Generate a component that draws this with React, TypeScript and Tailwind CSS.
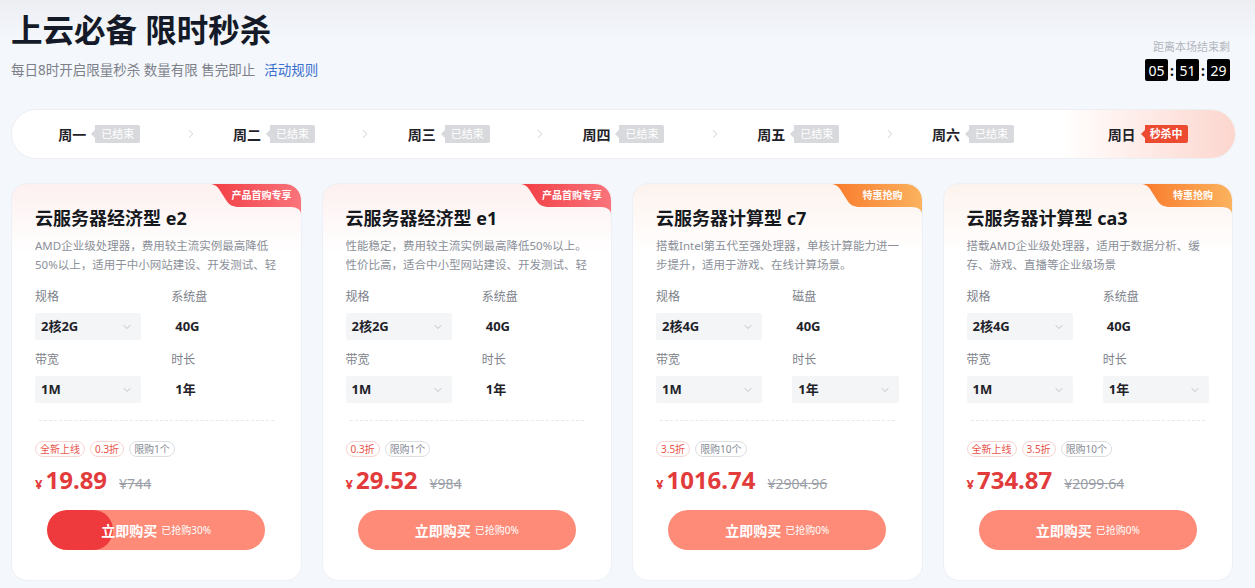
import { ChevronDown, ChevronRight } from "lucide-react";

type Spec = { label: string; value: string; select?: boolean };

type Card = {
  title: string;
  desc: string[];
  tag: "red" | "orange";
  tagText: string;
  specs: Spec[];
  badges: { text: string; red?: boolean }[];
  price: string;
  original: string;
  sold: number;
};

const DAYS = ["周一", "周二", "周三", "周四", "周五", "周六", "周日"];

const CARDS: Card[] = [
  {
    title: "云服务器经济型 e2",
    desc: ["AMD企业级处理器，费用较主流实例最高降低", "50%以上，适用于中小网站建设、开发测试、轻"],
    tag: "red",
    tagText: "产品首购专享",
    specs: [
      { label: "规格", value: "2核2G", select: true },
      { label: "系统盘", value: "40G" },
      { label: "带宽", value: "1M", select: true },
      { label: "时长", value: "1年" },
    ],
    badges: [{ text: "全新上线", red: true }, { text: "0.3折", red: true }, { text: "限购1个" }],
    price: "19.89",
    original: "744",
    sold: 30,
  },
  {
    title: "云服务器经济型 e1",
    desc: ["性能稳定，费用较主流实例最高降低50%以上。", "性价比高，适合中小型网站建设、开发测试、轻"],
    tag: "red",
    tagText: "产品首购专享",
    specs: [
      { label: "规格", value: "2核2G", select: true },
      { label: "系统盘", value: "40G" },
      { label: "带宽", value: "1M", select: true },
      { label: "时长", value: "1年" },
    ],
    badges: [{ text: "0.3折", red: true }, { text: "限购1个" }],
    price: "29.52",
    original: "984",
    sold: 0,
  },
  {
    title: "云服务器计算型 c7",
    desc: ["搭载Intel第五代至强处理器，单核计算能力进一", "步提升，适用于游戏、在线计算场景。"],
    tag: "orange",
    tagText: "特惠抢购",
    specs: [
      { label: "规格", value: "2核4G", select: true },
      { label: "磁盘", value: "40G" },
      { label: "带宽", value: "1M", select: true },
      { label: "时长", value: "1年", select: true },
    ],
    badges: [{ text: "3.5折", red: true }, { text: "限购10个" }],
    price: "1016.74",
    original: "2904.96",
    sold: 0,
  },
  {
    title: "云服务器计算型 ca3",
    desc: ["搭载AMD企业级处理器，适用于数据分析、缓", "存、游戏、直播等企业级场景"],
    tag: "orange",
    tagText: "特惠抢购",
    specs: [
      { label: "规格", value: "2核4G", select: true },
      { label: "系统盘", value: "40G" },
      { label: "带宽", value: "1M", select: true },
      { label: "时长", value: "1年", select: true },
    ],
    badges: [{ text: "全新上线", red: true }, { text: "3.5折", red: true }, { text: "限购10个" }],
    price: "734.87",
    original: "2099.64",
    sold: 0,
  },
];

function CornerTag({ color, text, id }: { color: "red" | "orange"; text: string; id: string }) {
  const stops = color === "red" ? ["#f23d43", "#f9747c"] : ["#f97a2b", "#fbb25e"];
  return (
    <div className="absolute right-0 top-0 h-[30px] w-[92px]">
      <svg width="92" height="30" viewBox="0 0 92 30" className="absolute inset-0">
        <defs>
          <linearGradient id={id} x1="0" y1="0" x2="1" y2="0">
            <stop offset="0" stopColor={stops[0]} />
            <stop offset="1" stopColor={stops[1]} />
          </linearGradient>
        </defs>
        <path
          d="M0 0 H76 A16 16 0 0 1 92 16 V30 C92 26 88 23 82 23 H30 C24 23 20 21 17 16 L10 5 C8 2 5 0 0 0 Z"
          fill={`url(#${id})`}
        />
      </svg>
      <span className="absolute left-[18px] right-[4px] top-[4px] text-center text-[10px] font-bold leading-[14px] text-white">
        {text}
      </span>
    </div>
  );
}

function SpecField({ spec }: { spec: Spec }) {
  return (
    <div className="flex flex-col">
      <span className="text-[12px] leading-[18px] text-[#7d828b]">{spec.label}</span>
      {spec.select ? (
        <div className="mt-[7px] flex h-[27px] items-center justify-between rounded-[2px] bg-[#f4f5f7] pl-[6px] pr-[8px]">
          <span className="text-[13px] font-bold text-[#1f2329]">{spec.value}</span>
          <ChevronDown size={12} strokeWidth={1.5} className="text-[#a9adb5]" />
        </div>
      ) : (
        <div className="mt-[7px] flex h-[27px] items-center pl-[4px]">
          <span className="text-[13px] font-bold text-[#1f2329]">{spec.value}</span>
        </div>
      )}
    </div>
  );
}

function ProductCard({ card, index }: { card: Card; index: number }) {
  const top = card.tag === "red" ? "#fdf0f0" : "#fdf3ee";
  return (
    <div
      className="relative overflow-hidden rounded-[16px] border border-[#edf0f5] px-[23px] pb-[30px] pt-[20px]"
      style={{ background: `linear-gradient(180deg, ${top} 0px, #ffffff 70px)` }}
    >
      <CornerTag color={card.tag} text={card.tagText} id={`tag-${index}`} />
      <h3 className="text-[18px] font-bold leading-[28px] text-[#15181d]">{card.title}</h3>
      <div className="mt-[4px] text-[11.5px] leading-[19px] text-[#8b9099]">
        {card.desc.map((line) => (
          <p key={line} className="overflow-hidden whitespace-nowrap">
            {line}
          </p>
        ))}
      </div>
      <div className="mt-[14px] grid grid-cols-2 gap-x-[30px] gap-y-[11px]">
        {card.specs.map((s) => (
          <SpecField key={s.label} spec={s} />
        ))}
      </div>
      <div className="mx-[4px] mt-[17px] border-t border-dashed border-[#e6e8ec]" />
      <div className="mt-[20px] flex items-center gap-[5px]">
        {card.badges.map((b) => (
          <span
            key={b.text}
            className={
              b.red
                ? "rounded-full border border-[#f8d4d2] px-[4px] text-[10px] leading-[14px] text-[#e8534a]"
                : "rounded-full border border-[#dcdee2] px-[4px] text-[10px] leading-[14px] text-[#858a93]"
            }
          >
            {b.text}
          </span>
        ))}
      </div>
      <div className="mt-[8px] flex items-baseline">
        <span className="text-[13px] font-bold text-[#e23b3b]">¥</span>
        <span className="ml-[3px] text-[24px] font-bold leading-[30px] text-[#e23b3b]">{card.price}</span>
        <span className="ml-[12px] text-[14px] text-[#9a9ea6] line-through">¥{card.original}</span>
      </div>
      <button className="relative mx-auto mt-[15px] flex h-[40px] w-[218px] items-center justify-center overflow-hidden rounded-full bg-[#fd8b78]">
        {card.sold > 0 ? (
          <span className="absolute left-0 top-0 h-full rounded-full bg-[#ee3a3d]" style={{ width: `${card.sold}%` }} />
        ) : null}
        <span className="relative text-[14px] font-bold text-white">立即购买</span>
        <span className="relative ml-[4px] text-[10px] text-white">已抢购{card.sold}%</span>
      </button>
    </div>
  );
}

export default function App() {
  return (
    <div
      className="min-h-[588px] px-[11px] pt-[10px]"
      style={{ fontFamily: '"Noto Sans", "Noto Sans CJK SC", sans-serif', background: "linear-gradient(180deg,#eceef2 0px,#f4f7fc 40px)" }}
    >
      <header className="flex items-start justify-between">
        <div>
          <h1 className="text-[31.5px] font-bold leading-[40px] text-[#141a27]">上云必备 限时秒杀</h1>
          <p className="mt-[10px] text-[13.5px] leading-[20px] text-[#7c8089]">
            每日8时开启限量秒杀 数量有限 售完即止
            <a className="ml-[9px] text-[#3a6fd0]" href="#">
              活动规则
            </a>
          </p>
        </div>
        <div className="mr-[14px] mt-[30px] flex flex-col items-end">
          <span className="text-[11px] leading-[14px] text-[#b3b7be]">距离本场结束剩</span>
          <div className="mt-[5px] flex items-center">
            {["05", "51", "29"].map((n, i) => (
              <div key={n} className="flex items-center">
                {i > 0 ? <span className="w-[8px] text-center text-[14px] font-bold text-[#111]">:</span> : null}
                <span className="flex h-[22px] w-[23px] items-center justify-center rounded-[2px] bg-black text-[14px] text-white">
                  {n}
                </span>
              </div>
            ))}
          </div>
        </div>
      </header>

      <nav className="mr-[8px] mt-[28px] grid h-[50px] grid-cols-7 overflow-hidden rounded-full border border-[#eceef2] bg-white">
        {DAYS.map((d, i) => {
          const last = i === DAYS.length - 1;
          return (
            <div
              key={d}
              className={
                last
                  ? "relative flex items-center justify-center bg-gradient-to-r from-white to-[#fcd6ce]"
                  : "relative flex items-center justify-center"
              }
            >
              <span className="text-[14px] font-bold text-[#1f2329]">{d}</span>
              <span
                className={
                  last
                    ? "ml-[5px] h-0 w-0 border-y-[4px] border-r-[4px] border-y-transparent border-r-[#ec4a31]"
                    : "ml-[5px] h-0 w-0 border-y-[4px] border-r-[4px] border-y-transparent border-r-[#d8d9dc]"
                }
              />
              <span
                className={
                  last
                    ? "flex h-[18px] items-center rounded-r-[2px] bg-[#ec4a31] px-[5px] text-[11px] font-bold text-white"
                    : "flex h-[18px] items-center rounded-r-[2px] bg-[#d8d9dc] px-[6px] text-[11px] text-white"
                }
              >
                {last ? "秒杀中" : "已结束"}
              </span>
              {!last ? (
                <ChevronRight size={14} strokeWidth={1.5} className="absolute right-[-11px] text-[#c4c8cf]" />
              ) : null}
            </div>
          );
        })}
      </nav>

      <main className="mr-[11px] mt-[24px] grid grid-cols-4 gap-[20px]">
        {CARDS.map((c, i) => (
          <ProductCard key={c.title} card={c} index={i} />
        ))}
      </main>
    </div>
  );
}
